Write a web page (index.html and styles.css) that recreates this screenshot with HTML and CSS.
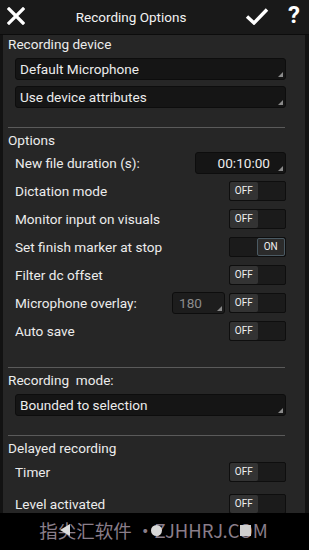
FILE: index.html
```html
<!DOCTYPE html>
<html lang="en">

<head>
    <meta charset="UTF-8">
    <meta name="viewport" content="width=device-width, initial-scale=1.0">
    <title>Recording Options</title>
    <link rel="stylesheet" href="styles.css">
</head>

<body>

    <div class="titlebar">
        <svg class="icon close" viewBox="0 0 18 18" width="18" height="18">
            <path d="M2 2 L16 16 M16 2 L2 16" stroke="#fff" stroke-width="3.2" stroke-linecap="square" fill="none" />
        </svg>
        <div class="title">Recording Options</div>
        <svg class="icon check" viewBox="0 0 24 18" width="24" height="18">
            <path d="M2 9.5 L9 16 L22 2.5" stroke="#fff" stroke-width="3.4" fill="none" />
        </svg>
        <div class="help">?</div>
    </div>

    <div class="panel">
        <div class="section-title">Recording device</div>
        <div class="dropdown">Default Microphone</div>
        <div class="dropdown">Use device attributes</div>

        <div class="divider"></div>

        <div class="section-title">Options</div>
        <div class="row">
            <span>New file duration (s):</span>
            <div class="dropdown small right">00:10:00</div>
        </div>
        <div class="row">
            <span>Dictation mode</span>
            <div class="toggle"><b>OFF</b><i></i></div>
        </div>
        <div class="row">
            <span>Monitor input on visuals</span>
            <div class="toggle"><b>OFF</b><i></i></div>
        </div>
        <div class="row">
            <span>Set finish marker at stop</span>
            <div class="toggle on"><i></i><b>ON</b></div>
        </div>
        <div class="row">
            <span>Filter dc offset</span>
            <div class="toggle"><b>OFF</b><i></i></div>
        </div>
        <div class="row">
            <span>Microphone overlay:</span>
            <div class="controls">
                <div class="dropdown number">180</div>
                <div class="toggle"><b>OFF</b><i></i></div>
            </div>
        </div>
        <div class="row">
            <span>Auto save</span>
            <div class="toggle"><b>OFF</b><i></i></div>
        </div>

        <div class="divider second"></div>

        <div class="section-title">Recording &nbsp;mode:</div>
        <div class="dropdown">Bounded to selection</div>

        <div class="divider third"></div>

        <div class="section-title">Delayed recording</div>
        <div class="row tall first">
            <span>Timer</span>
            <div class="toggle"><b>OFF</b><i></i></div>
        </div>
        <div class="row tall">
            <span>Level activated</span>
            <div class="toggle"><b>OFF</b><i></i></div>
        </div>
    </div>

    <div class="navbar">
        <div class="watermark">指尖汇软件 •ZJHHRJ.COM</div>
        <div class="navkeys">
            <svg viewBox="0 0 14 14" width="14" height="14"><path d="M12 1 L2 7 L12 13 Z" fill="#ddd" /></svg>
            <span class="dot"></span>
            <span class="square"></span>
        </div>
    </div>

</body>

</html>
```

FILE: styles.css
```css
html,
body {
    margin: 0;
    padding: 0;
    width: 309px;
    height: 550px;
    overflow: hidden;
    background: #121212;
    font-family: Roboto, 'Noto Sans', sans-serif;
    color: #ececec;
}

body {
    display: flex;
    flex-direction: column;
}

/* Title bar */

.titlebar {
    height: 34px;
    flex: none;
    display: flex;
    align-items: center;
    padding: 0 9px 0 7px;
    background: #191919;
    border-bottom: 1px solid #0c0c0c;
}

.titlebar .close {
    margin-top: -2px;
}

.title {
    flex: 1;
    text-align: center;
    font-size: 13.5px;
    color: #f2f2f2;
    padding-right: 8px;
}

.titlebar .check {
    margin-right: 19px;
    margin-top: -2px;
}

.help {
    font-size: 24px;
    font-weight: bold;
    color: #fff;
    line-height: 24px;
    margin-top: -4px;
}

/* Panel */

.panel {
    flex: none;
    height: 478px;
    margin: 0 4px 0 3px;
    background: #262626;
    overflow: hidden;
    padding: 0 19px 0 12px;
}

.section-title {
    font-size: 13.6px;
    line-height: 17px;
    padding-top: 1px;
    margin-left: -7px;
}

.dropdown {
    position: relative;
    height: 20px;
    line-height: 20px;
    font-size: 13.6px;
    padding: 0 4px;
    background: #151515;
    border: 1px solid #0d0d0d;
    border-radius: 3px;
    margin-top: 5px;
}

.dropdown + .dropdown {
    margin-top: 6px;
}

.dropdown::after {
    content: '';
    position: absolute;
    right: 2px;
    bottom: 2px;
    border-style: solid;
    border-width: 0 0 5px 5px;
    border-color: transparent transparent #8a8a8a transparent;
}

.dropdown.small {
    width: 73px;
    margin: 0;
}

.dropdown.right {
    text-align: right;
    padding-right: 15px;
    width: 70px;
}

.dropdown.number {
    width: 41px;
    margin: 0;
    padding: 0 4px 0 6px;
    background: #1d1d1d;
    color: #8c8c8c;
}

.divider {
    height: 1px;
    background: #5a5a5a;
    margin: 19px 1px 3px -7px;
}

.divider.second {
    margin-top: 22px;
}

.divider.third {
    margin-top: 19px;
}

.row {
    height: 28px;
    display: flex;
    align-items: center;
    justify-content: space-between;
    font-size: 13.6px;
}

.row.tall {
    height: 32px;
}

.row.tall.first {
    margin-top: -1px;
}

.controls {
    display: flex;
    gap: 4px;
    align-items: center;
}

/* Toggles */

.toggle {
    width: 55px;
    height: 18px;
    display: flex;
    border: 1px solid #0e0e0e;
    border-radius: 2px;
    background: #1b1b1b;
}

.toggle b,
.toggle i {
    flex: 1;
    display: block;
}

.toggle b {
    font-weight: normal;
    font-size: 10px;
    line-height: 18px;
    text-align: center;
    background: #333;
    color: #f0f0f0;
    border-radius: 2px;
}

.toggle.on b {
    background: #2b2b2b;
    border: 1px solid #4b5a63;
    line-height: 16px;
}

/* Nav bar */

.navbar {
    flex: 1;
    position: relative;
    background: #000;
}

.watermark {
    text-align: center;
    font-family: 'Noto Sans CJK SC', 'Noto Sans', sans-serif;
    font-size: 18.5px;
    line-height: 34px;
    color: #8a7e8a;
    padding-right: 2px;
}

.navkeys {
    position: absolute;
    top: 10px;
    left: 58px;
    display: flex;
    align-items: center;
    gap: 0;
}

.navkeys svg {
    margin-right: 79px;
}

.dot {
    width: 11px;
    height: 11px;
    border-radius: 50%;
    background: #d8d8d8;
    margin-right: 78px;
}

.square {
    width: 11px;
    height: 11px;
    background: #cfcfcf;
}
```
